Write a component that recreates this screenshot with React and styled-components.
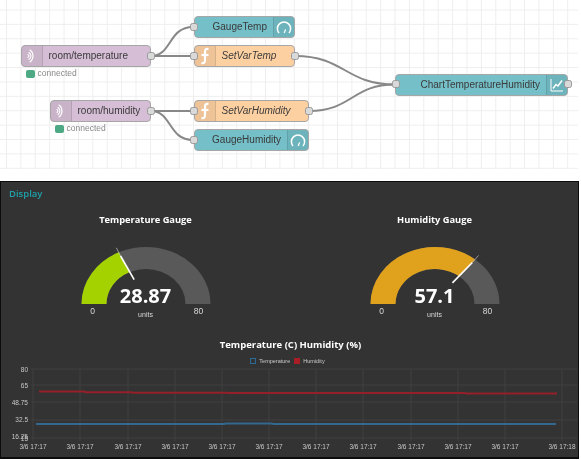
import React from "react";
import styled, { createGlobalStyle } from "styled-components";

const GlobalStyle = createGlobalStyle`
  html, body {
    margin: 0;
    padding: 0;
    background: #fff;
    font-family: "Liberation Sans", Arial, sans-serif;
  }
`;

const nodes = [
  { id: "t", kind: "mqtt", label: "room/temperature", x: 20.5, y: 45, w: 130.5, status: true },
  { id: "h", kind: "mqtt", label: "room/humidity", x: 49.5, y: 100, w: 101.5, status: true },
  { id: "gt", kind: "gauge", label: "GaugeTemp", x: 193.5, y: 16, w: 101.5 },
  { id: "st", kind: "func", label: "SetVarTemp", x: 193.5, y: 45, w: 101.5 },
  { id: "sh", kind: "func", label: "SetVarHumidity", x: 193.5, y: 100, w: 115.5 },
  { id: "gh", kind: "gauge", label: "GaugeHumidity", x: 193.5, y: 129, w: 115.5 },
  { id: "c", kind: "chart", label: "ChartTemperatureHumidity", x: 395, y: 73.5, w: 173 },
];

const wires = [
  "M151 56 C172 56 168 27 193 27",
  "M151 56 L193 56",
  "M151 111 L193 111",
  "M151 111 C172 111 168 140 193 140",
  "M295 56 C345 56 345 84.5 395 84.5",
  "M309 111 C352 111 352 84.5 395 84.5",
];

const nodeColors = { mqtt: "#d6bfd6", gauge: "#74bfc8", chart: "#74bfc8", func: "#fdd0a2" };

function WaveIcon() {
  return (
    <svg width="10" height="16" viewBox="0 0 10 16" fill="none" stroke="#fff" strokeLinecap="round">
      <path d="M3 2 C7 5 7 11 3 14" strokeWidth="1.1" />
      <path d="M2 4.5 C4.6 6.5 4.6 9.5 2 11.5" strokeWidth="1.1" />
      <path d="M1 6.5 C2.2 7.4 2.2 8.6 1 9.5" strokeWidth="1.1" />
    </svg>
  );
}

function FuncIcon() {
  return (
    <svg width="12" height="18" viewBox="0 0 12 18" fill="none" stroke="#fff" strokeWidth="2.2">
      <path d="M9.5 2 C6.5 1.4 6 3 6 5 L6 13 C6 15.6 5 16.6 2.5 16" />
      <path d="M2.5 8 L9.5 8" />
    </svg>
  );
}

function GaugeIcon() {
  return (
    <svg width="16" height="16" viewBox="0 0 16 16" fill="none" stroke="#fff" strokeWidth="1.5">
      <path d="M3 14 A6.6 6.6 0 1 1 13 14" />
      <path d="M8.2 14 L9.6 10.4" strokeWidth="1.2" />
    </svg>
  );
}

function ChartIcon() {
  return (
    <svg width="14" height="14" viewBox="0 0 14 14" fill="none" stroke="#fff">
      <path d="M1 1 L1 13 L13 13" strokeWidth="1" />
      <path d="M3 10.5 L6 6.5 L8 8 L12 2.5" strokeWidth="1.5" />
    </svg>
  );
}

function FlowNode({ node }) {
  const hasInput = node.kind !== "mqtt";
  const hasOutput = node.kind !== "gauge";
  const iconRight = node.kind === "gauge" || node.kind === "chart";
  return (
    <>
      <NodeBox style={{ left: node.x, top: node.y, width: node.w }} $color={nodeColors[node.kind]}>
        {!iconRight && (
          <IconCell $left>
            {node.kind === "mqtt" ? <WaveIcon /> : <FuncIcon />}
          </IconCell>
        )}
        <NodeLabel $italic={node.kind === "func"} $iconRight={iconRight}>
          {node.label}
        </NodeLabel>
        {iconRight && (
          <IconCell>{node.kind === "chart" ? <ChartIcon /> : <GaugeIcon />}</IconCell>
        )}
        {hasInput && <Port $side="left" />}
        {hasOutput && <Port $side="right" />}
      </NodeBox>
      {node.status && (
        <Status style={{ left: node.x + 5.5, top: node.y + 24 }}>
          <StatusDot />
          connected
        </Status>
      )}
    </>
  );
}

function polar(cx, cy, rx, ry, deg) {
  const a = (deg * Math.PI) / 180;
  return [cx + rx * Math.cos(a), cy - ry * Math.sin(a)];
}

function arcPath(from, to) {
  const cx = 65;
  const cy = 59;
  const [x1, y1] = polar(cx, cy, 64.5, 57, from);
  const [x2, y2] = polar(cx, cy, 64.5, 57, to);
  const [x3, y3] = polar(cx, cy, 39.5, 35, to);
  const [x4, y4] = polar(cx, cy, 39.5, 35, from);
  return `M${x1} ${y1} A64.5 57 0 0 1 ${x2} ${y2} L${x3} ${y3} A39.5 35 0 0 0 ${x4} ${y4} Z`;
}

function Gauge({ title, value, max, color }) {
  const deg = 180 * (1 - value / max);
  const [tipX, tipY] = polar(65, 59, 70, 62, deg);
  const [midX, midY] = polar(65, 59, 60, 53, deg);
  const [baseX, baseY] = polar(65, 59, 28, 27, deg);
  return (
    <GaugeCard>
      <GaugeTitle>{title}</GaugeTitle>
      <GaugeBody>
        <svg width="130" height="60" viewBox="0 0 130 60">
          <path d={arcPath(180, 0)} fill="#595959" />
          <path d={arcPath(180, deg)} fill={color} />
          <path d={`M${baseX} ${baseY} L${midX} ${midY}`} stroke="#fff" strokeWidth="1.6" />
          <path d={`M${midX} ${midY} L${tipX} ${tipY}`} stroke="#ddd" strokeWidth="0.6" />
        </svg>
        <GaugeValue>{value}</GaugeValue>
      </GaugeBody>
      <GaugeScale>
        <span>0</span>
        <GaugeUnits>units</GaugeUnits>
        <span>{max}</span>
      </GaugeScale>
    </GaugeCard>
  );
}

const gridX = [32, 79, 127, 174, 221, 268, 315, 362, 410, 457, 504, 561];
const gridY = [369, 385, 402, 420, 438];
const yLabels = [
  ["80", 369],
  ["65", 385],
  ["48.75", 402],
  ["32.5", 419],
  ["16.25", 436],
  ["15", 438.5],
];

function LineChart() {
  const top = 365;
  return (
    <svg width="577" height="90" viewBox={`0 ${top} 577 90`}>
      {gridX.map((x) => (
        <path key={x} d={`M${x} 369 L${x} 441`} stroke="#414141" strokeWidth="1" />
      ))}
      {gridY.map((y) => (
        <path key={y} d={`M30 ${y} L576 ${y}`} stroke="#414141" strokeWidth="1" />
      ))}
      <path
        d="M38 391.6 L83 391.6 L85 392.3 L130 392.3 L133 392.7 L225 392.7 L230 393 L463 393 L466 393.5 L556 393.5"
        fill="none"
        stroke="#962029"
        strokeWidth="2"
      />
      <path
        d="M35 424 L223 424 L225 423.5 L270 423.5 L273 424 L555 424"
        fill="none"
        stroke="#33698f"
        strokeWidth="2"
      />
      {yLabels.map(([label, y]) => (
        <AxisText key={label} x="27" y={y + 2.5} textAnchor="end">
          {label}
        </AxisText>
      ))}
      {gridX.map((x) => (
        <AxisText key={x} x={x} y="448.5" textAnchor="middle">
          3/6 17:{x === 561 ? "18" : "17"}
        </AxisText>
      ))}
    </svg>
  );
}

export default function App() {
  return (
    <Page>
      <GlobalStyle />
      <Canvas>
        <Wires width="581" height="170">
          {wires.map((d) => (
            <path key={d} d={d} fill="none" stroke="#888" strokeWidth="2" />
          ))}
        </Wires>
        {nodes.map((node) => (
          <FlowNode key={node.id} node={node} />
        ))}
      </Canvas>
      <Dashboard>
        <GroupTitle>Display</GroupTitle>
        <GaugeRow>
          <Gauge title="Temperature Gauge" value={28.87} max={80} color="#a4d200" />
          <Gauge title="Humidity Gauge" value={57.1} max={80} color="#e0a11c" />
        </GaugeRow>
        <ChartTitle>Temperature (C) Humidity (%)</ChartTitle>
        <Legend>
          <LegendBox $color="#2a6a95" />
          <LegendLabel>Temperature</LegendLabel>
          <LegendBox $color="#a81e26" $filled />
          <LegendLabel>Humidity</LegendLabel>
        </Legend>
        <LineChart />
      </Dashboard>
    </Page>
  );
}

const Page = styled.div`
  width: 581px;
  height: 460px;
  overflow: hidden;
  background: #fff;
  filter: blur(0.3px);
`;

const Canvas = styled.div`
  position: relative;
  width: 578px;
  height: 169px;
  margin-bottom: 12px;
  background-color: #fff;
  background-image: linear-gradient(#eee 1px, transparent 1px),
    linear-gradient(90deg, #eee 1px, transparent 1px);
  background-size: 14.4px 14.4px;
  background-position: 6px 9.5px;
`;

const Wires = styled.svg`
  position: absolute;
  left: 0;
  top: 0;
`;

const NodeBox = styled.div`
  position: absolute;
  box-sizing: border-box;
  height: 22px;
  display: flex;
  align-items: stretch;
  background: ${(p) => p.$color};
  border: 1px solid #a6a6a6;
  border-radius: 4px;
`;

const IconCell = styled.div`
  flex: none;
  width: 21px;
  display: flex;
  align-items: center;
  justify-content: center;
  background: rgba(0, 0, 0, 0.06);
  border-radius: ${(p) => (p.$left ? "3px 0 0 3px" : "0 3px 3px 0")};
  ${(p) => (p.$left ? "border-right: 1px solid rgba(0,0,0,.1);" : "border-left: 1px solid rgba(0,0,0,.1);")}
  box-sizing: border-box;
`;

const NodeLabel = styled.div`
  flex: 1;
  text-align: ${(p) => (p.$iconRight ? "right" : "left")};
  padding: ${(p) => (p.$iconRight ? "0 6px 0 0" : "0 0 0 6px")};
  font-size: 10px;
  line-height: 20px;
  color: #3a3a3a;
  white-space: nowrap;
  font-style: ${(p) => (p.$italic ? "italic" : "normal")};
`;

const Port = styled.span`
  position: absolute;
  top: 5.5px;
  ${(p) => p.$side}: -4.5px;
  width: 8px;
  height: 8px;
  box-sizing: border-box;
  background: #d9d9d9;
  border: 1px solid #999;
  border-radius: 2.5px;
`;

const Status = styled.div`
  position: absolute;
  display: flex;
  align-items: center;
  gap: 3px;
  font-size: 8.5px;
  line-height: 9px;
  color: #888;
`;

const StatusDot = styled.span`
  width: 8.5px;
  height: 8px;
  border-radius: 2px;
  background: #4da884;
`;

const Dashboard = styled.section`
  box-sizing: border-box;
  width: 579px;
  height: 278px;
  background: #333;
  border: 1.5px solid #0c0c0c;
  border-right-width: 1px;
  border-bottom-width: 2.5px;
  padding-top: 6px;
  font-family: "Open Sans", sans-serif;
  color: #fff;
`;

const GroupTitle = styled.h2`
  margin: 0 0 0 8px;
  font-size: 9.5px;
  line-height: 12px;
  font-weight: 600;
  color: #1fa0aa;
`;

const GaugeRow = styled.div`
  display: grid;
  grid-template-columns: 289px 289px;
  margin-top: 14px;
`;

const GaugeCard = styled.div`
  display: flex;
  flex-direction: column;
  align-items: center;
`;

const GaugeTitle = styled.div`
  font-size: 9.3px;
  line-height: 12px;
  font-weight: 700;
`;

const GaugeBody = styled.div`
  position: relative;
  width: 130px;
  height: 60px;
  margin-top: 19px;
`;

const GaugeValue = styled.div`
  position: absolute;
  left: 0;
  right: 0;
  bottom: -1px;
  text-align: center;
  font-size: 20px;
  line-height: 20px;
  font-weight: 700;
`;

const GaugeScale = styled.div`
  width: 130px;
  margin-top: 1px;
  display: grid;
  grid-template-columns: 24px 1fr 24px;
  text-align: center;
  font-family: "Liberation Sans", sans-serif;
  font-size: 8.5px;
  line-height: 10px;
  color: #d8d8d8;
`;

const GaugeUnits = styled.span`
  font-size: 7px;
  padding-top: 4px;
`;

const ChartTitle = styled.div`
  margin-top: 19px;
  padding-left: 2px;
  text-align: center;
  font-size: 9.5px;
  line-height: 12px;
  font-weight: 700;
`;

const Legend = styled.div`
  display: flex;
  justify-content: center;
  align-items: center;
  margin-top: 6px;
  height: 8px;
  font-family: "Liberation Sans", sans-serif;
`;

const LegendBox = styled.span`
  width: 6px;
  height: 6px;
  box-sizing: border-box;
  border: 1px solid ${(p) => p.$color};
  background: ${(p) => (p.$filled ? p.$color : "transparent")};
  margin-right: 3px;
`;

const LegendLabel = styled.span`
  font-size: 5.5px;
  color: #ccc;
  margin-right: 4px;
`;

const AxisText = styled.text`
  font-family: "Liberation Sans", sans-serif;
  font-size: 6.5px;
  fill: #c8c8c8;
`;
